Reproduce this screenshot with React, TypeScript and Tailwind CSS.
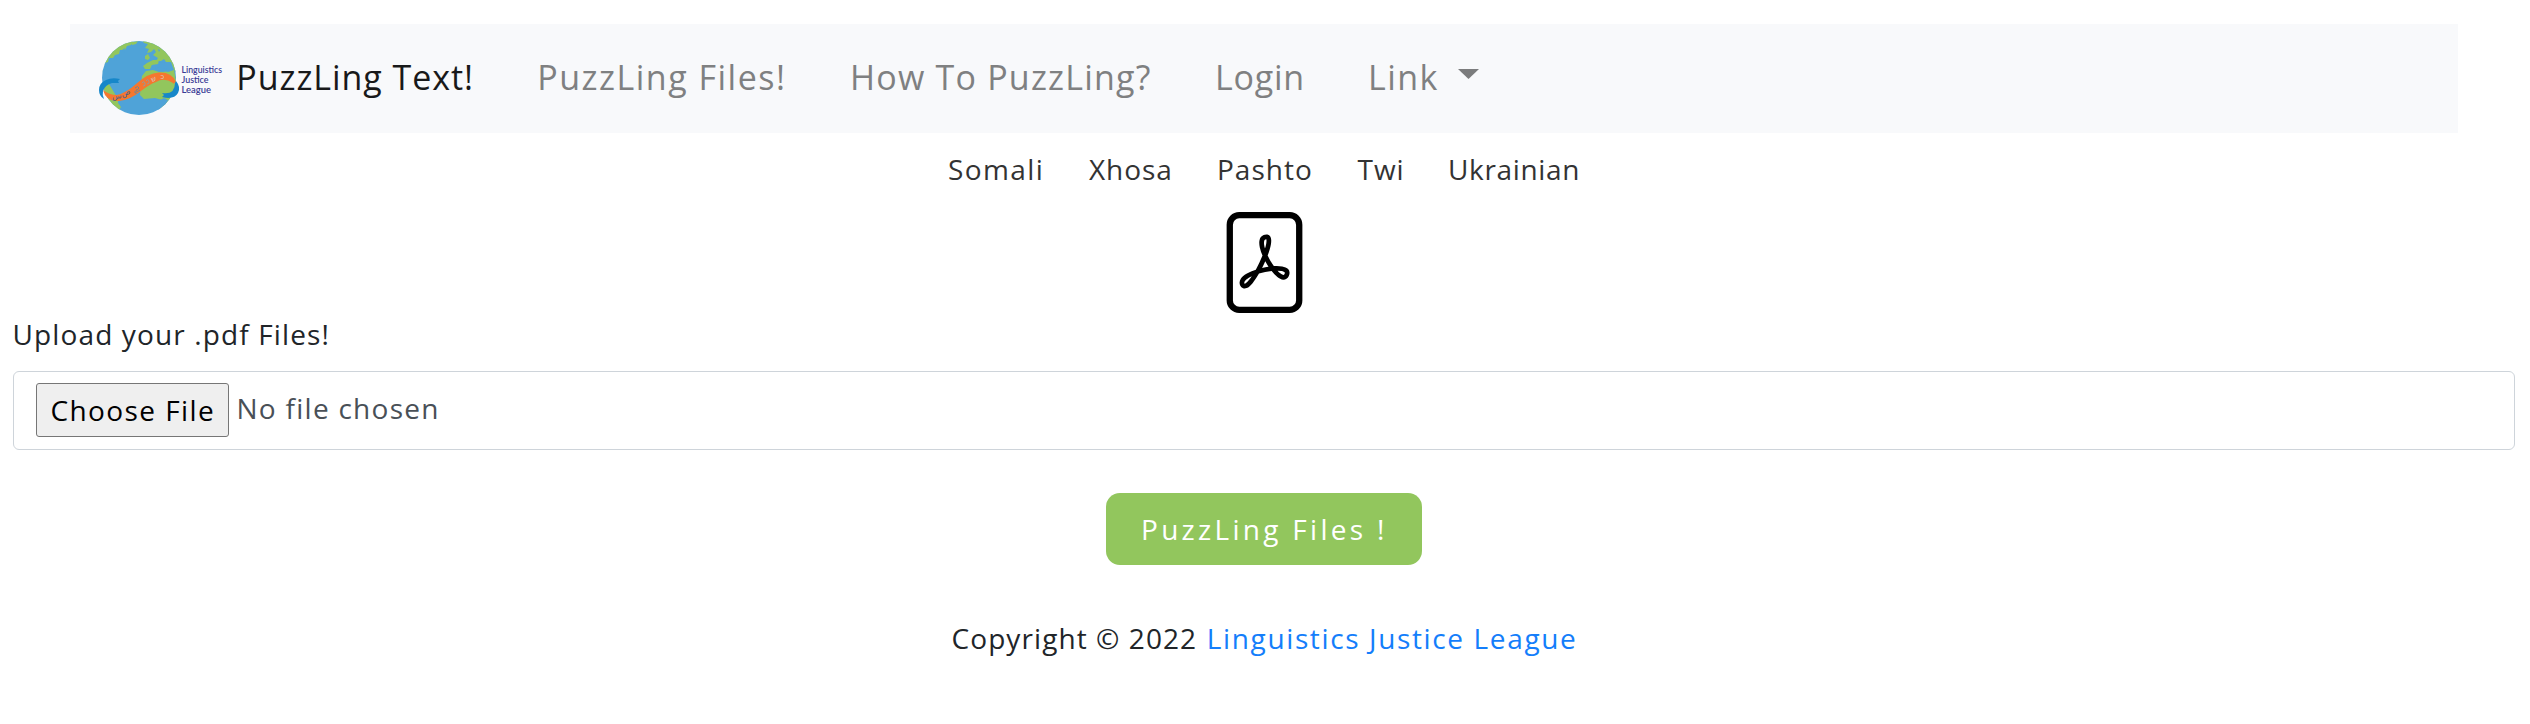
import { BsFilePdf } from "react-icons/bs";

function Logo() {
  return (
    <svg width="130" height="76" viewBox="0 0 130 76" className="shrink-0">
      <defs>
        <clipPath id="globe"><circle cx="41" cy="38" r="37" /></clipPath>
      </defs>
      <circle cx="41" cy="38" r="37" fill="#4fa3d8" />
      <g clipPath="url(#globe)" fill="#92c65d">
        <path d="M3 38 L5 27 L7 23 L10 22 L11 18 L15 18 L17 15 L21 14 L22 10 L27 10 L29 6 L33 5 L35 2 L33 0 H3 Z" />
        <path d="M44 0 L46 3 L50 4 L47 8 L51 9 L49 13 L53 12 L56 9 L58 12 L55 15 L60 18 L58 21 L63 21 L66 19 L68 22 L73 22 L76 30 L80 34 V0 Z" />
        <path d="M34 2 L40 1 L38 4 L34 5 Z" />
        <path d="M47 16 L50 14 L52 18 L50 20 L47 19 Z" />
        <path d="M45 26 L49 23 L55 20 L61 20 L60 24 L54 25 L52 29 L47 29 Z" />
        <path d="M43 44 L44 36 L48 31 L55 30 L61 32 L66 31 L70 32 L76 30 L80 52 L73 68 L66 73 L60 71 L64 66 L64 60 L57 58 L46 59 L42 55 Z" />
        <path d="M5 44 L11 44 L14 49 L20 59 L20 63 L23 67 L20 72 L6 62 Z" />
      </g>
      <g clipPath="url(#globe)" fill="#4fa3d8">
        <path d="M53 26 L56 25 L58 29 L62 26 L64 29 L68 28 L69 31 L65 32 L60 31 Z" />
        <path d="M61 23 L66 22 L67 25 L62 25 Z M15 19 L19 17 L18 21 Z M24 10 L27 8 L26 13 Z M60 9 L62 10 L61 12 Z" />
        <path d="M58 62 L66 58 L70 60 L66 68 L60 72 Z" />
      </g>
      <path d="M5 50 Q11 55 19 55 Q28 53 38 44 Q50 33 61 32.500 Q74 32 78 42 Q74 45 75 43 Q66 37 58 42 Q52 44 43 51 Q32 60 21 61 Q8 62 5 50 Z" fill="#f5772f" />
      <path d="M21 43 L20 41 L22 39 Q14 37 8 40 Q1 43 1 50 Q1 56 6 59 Q4 55 5 51 Q7 45 14 43 Z" fill="#1787c9" />
      <path d="M78 41 Q83 47 80 53 Q76 60 64 57 L66 55 L64 53 Q77 55 77 43 Z" fill="#1787c9" />
      <g fill="#3f5f8c" fontFamily="DejaVu Sans" fontSize="8">
        <text x="14" y="59" transform="rotate(-4 14 59)">س</text>
        <text x="24" y="57" transform="rotate(-22 24 57)">ص</text>
      </g>
      <g fill="none" stroke="#64889a" strokeWidth="0.9">
        <path d="M37 48 q3 -3 4 0 q-1 2 -3 2 q0 3 4 0 M37 51 q-1 3 2 2" />
        <path d="M44 43 q2 -3 3 0 q1 3 -2 3 M48 41 q2 -3 3 0 q1 3 -2 3" stroke="#8f9da0" />
      </g>
      <g fill="#d9ccc6" fontFamily="DejaVu Sans" fontSize="7">
        <text x="54" y="42" transform="rotate(-20 54 42)">ש</text>
        <text x="62.500" y="38.500">כ</text>
      </g>
      <g fill="#3a3c96" fontFamily="Lato" fontWeight="600" fontSize="9.4">
        <text x="83.500" y="32.700" textLength="40.500" lengthAdjust="spacingAndGlyphs">Linguistics</text>
        <text x="83.500" y="43" textLength="27" lengthAdjust="spacingAndGlyphs">Justice</text>
        <text x="83.500" y="53.300" textLength="29.500" lengthAdjust="spacingAndGlyphs">League</text>
      </g>
    </svg>
  );
}

export default function App() {
  return (
    <div className="min-h-[724px] overflow-hidden bg-white font-['Open_Sans',sans-serif] text-[28px] whitespace-nowrap text-[#212529]">
      <nav className="mt-6 mr-[72px] ml-[70px] flex h-[109px] items-center bg-[#f8f9fb] pl-7 text-[34px] text-[#7f8081]">
        <div className="-mt-px w-[138.300px] shrink-0"><Logo /></div>
        <a className="mb-[2px] w-[301px] tracking-[0.950px] text-[#18191a]">PuzzLing Text!</a>
        <a className="mb-[2px] w-[312.800px] tracking-[1.500px]">PuzzLing Files!</a>
        <a className="mb-[2px] w-[364.800px] tracking-[1.200px]">How To PuzzLing?</a>
        <a className="mb-[2px] w-[153px] tracking-[0.800px]">Login</a>
        <a className="mb-[2px] w-[90px] tracking-[1.500px]">Link</a>
        <svg width="21" height="10" viewBox="0 0 21 10" className="mb-[9px]"><path d="M0 0H21L10.500 10Z" fill="#7b7c7d" /></svg>
      </nav>
      <div className="flex h-[71px] items-center pl-[948px] text-[#333]">
        <a className="w-[141px] tracking-[1.400px]">Somali</a>
        <a className="w-[128px] tracking-[0.950px]">Xhosa</a>
        <a className="w-[140.500px] tracking-[1px]">Pashto</a>
        <a className="w-[90.500px] tracking-[1px]">Twi</a>
        <a className="tracking-[0.650px]">Ukrainian</a>
      </div>
      <BsFilePdf className="mx-auto mt-2 block size-[101px] -translate-x-px text-black" />
      <label className="flex h-[41px] items-center pl-[12.500px] tracking-[1.130px]">Upload your .pdf Files!</label>
      <div className="mt-[17px] mr-[15px] ml-[13px] flex h-[79px] items-start rounded-md border border-[#ced4da] pt-[11px] pl-[22px]">
        <button className="flex h-[54px] w-[193px] items-center rounded-[3px] border border-[#767676] bg-[#efefef] pb-px pl-[13.500px] tracking-[1.400px] text-black">Choose File</button>
        <span className="ml-[7.500px] leading-[50px] tracking-[1.270px] text-[#495057]">No file chosen</span>
      </div>
      <button className="mt-[43px] ml-[1106px] flex h-[72px] w-[316px] items-center rounded-[14px] bg-[#92c65d] pb-px pl-[35px] tracking-[3.300px] text-white">PuzzLing Files !</button>
      <footer className="mt-[43px] flex h-[59px] items-center pl-[951.500px]">
        <span className="w-[255.300px] tracking-[1.080px]">Copyright © 2022</span>
        <a className="tracking-[1.630px] text-[#147efb]">Linguistics Justice League</a>
      </footer>
    </div>
  );
}
